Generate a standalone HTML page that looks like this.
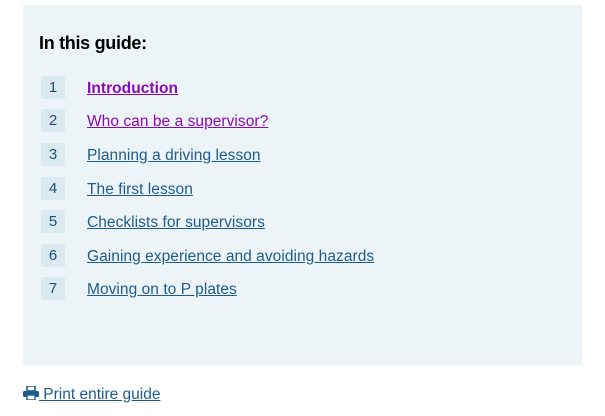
<!DOCTYPE html>
<html><head><style>
body{margin:0;width:605px;height:416px;background:#fff;font-family:"Liberation Sans",sans-serif;position:relative;overflow:hidden}
.panel{position:absolute;left:23px;top:5px;width:559px;height:360px;background:#edf4f8}
h2{position:absolute;left:39px;top:33px;margin:0;font-size:18px;font-weight:bold;color:#000;letter-spacing:-0.3px}
.row{position:absolute;left:41px;height:23px;width:540px}
.n{position:absolute;left:0;top:0;width:24px;height:23px;background:#dbe9f1;color:#1d4f78;font-size:15px;line-height:23px;text-align:center}
.row a{position:absolute;left:46px;top:1px;line-height:23px;font-size:15.5px;color:#1d5c8c;text-decoration:underline;white-space:nowrap;letter-spacing:0.05px}
.v{color:#8b0ab5!important}
.print{position:absolute;left:23px;top:385px;font-size:15.5px;color:#1d5c8c;text-decoration:underline;line-height:20px;white-space:nowrap}
</style></head><body>
<div class="panel"></div>
<h2>In this guide:</h2>
<div class="row" style="top:76px"><span class="n">1</span><a class="v" style="font-weight:bold">Introduction</a></div>
<div class="row" style="top:109px"><span class="n">2</span><a class="v">Who can be a supervisor?</a></div>
<div class="row" style="top:143px"><span class="n">3</span><a>Planning a driving lesson</a></div>
<div class="row" style="top:177px"><span class="n">4</span><a>The first lesson</a></div>
<div class="row" style="top:210px"><span class="n">5</span><a>Checklists for supervisors</a></div>
<div class="row" style="top:244px"><span class="n">6</span><a>Gaining experience and avoiding hazards</a></div>
<div class="row" style="top:277px"><span class="n">7</span><a>Moving on to P plates</a></div>
<div class="print"><svg width="16" height="14" viewBox="0 0 16 14" style="vertical-align:-1px"><rect x="4" y="0" width="8" height="5" fill="none" stroke="#1d5c8c" stroke-width="1.6"/><rect x="0" y="5" width="16" height="6" rx="1.5" fill="#1d5c8c"/><rect x="4" y="9" width="8" height="5" fill="#fff" stroke="#1d5c8c" stroke-width="1.4"/></svg> Print entire guide</div>
</body></html>
